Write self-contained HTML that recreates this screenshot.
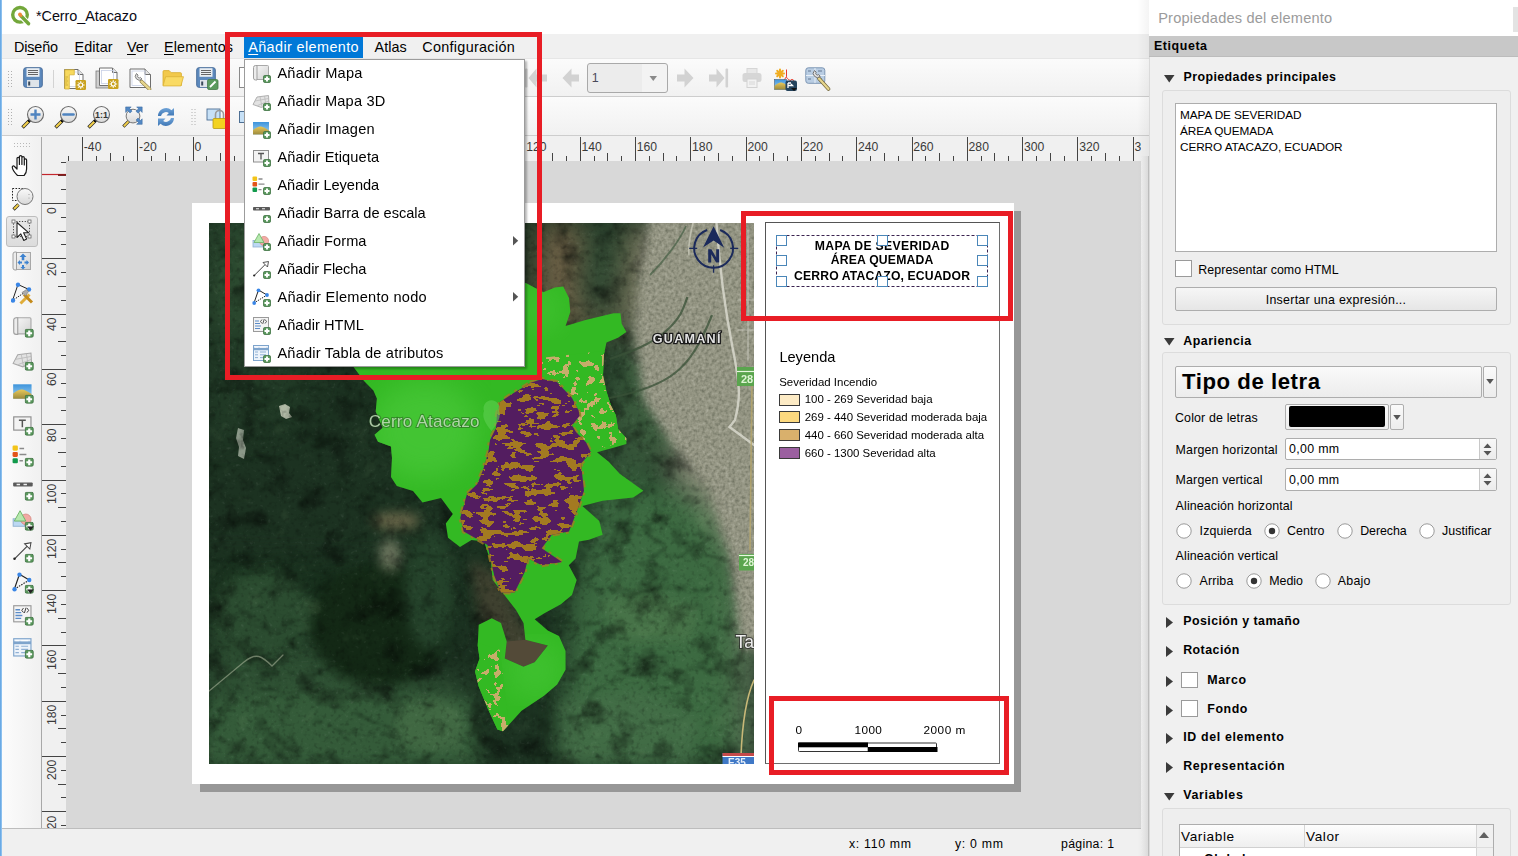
<!DOCTYPE html>
<html><head><meta charset="utf-8"><style>*{box-sizing:border-box}
html,body{margin:0;padding:0}
body{width:1518px;height:856px;position:relative;overflow:hidden;background:#f0f0f0;font-family:"Liberation Sans",sans-serif;color:#000}
.a{position:absolute}
.t{position:absolute;white-space:nowrap;line-height:1}
u{text-decoration-thickness:1px;text-underline-offset:1.5px}
svg{overflow:visible}
</style></head><body>
<svg width="0" height="0" style="position:absolute"><defs>
<linearGradient id="gPaper" x1="0" y1="0" x2="1" y2="1"><stop offset="0" stop-color="#f7f7f7"/><stop offset="1" stop-color="#d2d2d2"/></linearGradient>
<linearGradient id="gSky" x1="0" y1="0" x2="0" y2="1"><stop offset="0" stop-color="#3d94dc"/><stop offset="1" stop-color="#a9d6f2"/></linearGradient>
<linearGradient id="gSand" x1="0" y1="0" x2="0" y2="1"><stop offset="0" stop-color="#e9c95a"/><stop offset="1" stop-color="#9c8a3c"/></linearGradient>
<linearGradient id="gLens" x1="0" y1="0" x2="0" y2="1"><stop offset="0" stop-color="#fafafa"/><stop offset="1" stop-color="#d8d8d8"/></linearGradient>
<linearGradient id="gBlue" x1="0" y1="0" x2="0" y2="1"><stop offset="0" stop-color="#6fa3d8"/><stop offset="1" stop-color="#3f77b5"/></linearGradient>
<symbol id="badge" viewBox="0 0 8 8"><rect x=".5" y=".5" width="7" height="7" rx="1.3" fill="#59975c" stroke="#3f7243" stroke-width=".8"/><path d="M4 1.5V6.5M1.5 4H6.5" stroke="#fff" stroke-width="1.9"/></symbol>
<symbol id="i-map" viewBox="0 0 20 20"><rect x="3.5" y="1.5" width="13" height="14" rx="1" fill="url(#gPaper)" stroke="#a9a9a9"/><path d="M1.5 3.5a2 2 0 0 1 2-2h1.5v14.5h-1.5a2 2 0 0 1-2-2z" fill="#ececec" stroke="#a0a0a0"/><use href="#badge" x="11" y="11" width="8" height="8"/></symbol>
<symbol id="i-3d" viewBox="0 0 20 20"><path d="M1 12.5L5 5 16.5 3.5 17 12 9.5 15.5z" fill="#e2e2e2" stroke="#a8a8a8" stroke-width=".9"/><path d="M3 9l13.5-2.5M5.5 13.5L16.8 9M8 4.5l2 10.5M12.5 4l1.5 9.5" stroke="#b8b8b8" stroke-width=".7" fill="none"/><use href="#badge" x="11" y="11" width="8" height="8"/></symbol>
<symbol id="i-img" viewBox="0 0 20 20"><rect x="1" y="2" width="16" height="12.5" fill="url(#gSky)"/><path d="M1 10Q6 6 9 6.5T17 10.5V14.5H1z" fill="url(#gSand)"/><use href="#badge" x="11" y="11" width="8" height="8"/></symbol>
<symbol id="i-label" viewBox="0 0 20 20"><rect x="1.5" y="2.5" width="15" height="11.5" fill="#f3f3f3" stroke="#8e8e8e"/><path d="M6 5.5h6M9 5.5v6" stroke="#555" stroke-width="1.3"/><use href="#badge" x="11" y="11" width="8" height="8"/></symbol>
<symbol id="i-legend" viewBox="0 0 20 20"><rect x=".5" y=".5" width="4.6" height="4.4" rx="1" fill="#f3c419"/><rect x=".5" y="6" width="4.6" height="4.4" rx="1" fill="#e2541a"/><rect x=".5" y="11.5" width="4.6" height="4.4" rx="1" fill="#129a4c"/><path d="M6.5 3h4M6.5 8.2h6M6.5 13.7h3" stroke="#8a8a8a" stroke-width="1.3"/><use href="#badge" x="11" y="11" width="8" height="8"/></symbol>
<symbol id="i-scale" viewBox="0 0 20 20"><rect x="1" y="3" width="17" height="3.5" rx=".8" fill="#5a5a5a"/><path d="M4 4.75h3M10 4.75h3" stroke="#eee" stroke-width="1.2"/><use href="#badge" x="11" y="11" width="8" height="8"/></symbol>
<symbol id="i-shape" viewBox="0 0 20 20"><rect x="1" y="8.5" width="10" height="6.5" fill="#bcd8f3" stroke="#8fb0d0" stroke-width=".8"/><circle cx="12" cy="9" r="4.6" fill="#f2aaa4" stroke="#d58880" stroke-width=".7"/><path d="M7 1.5L12 10.5H2z" fill="#b5e8ad" stroke="#6bb364" stroke-width=".8"/><use href="#badge" x="11" y="11" width="8" height="8"/></symbol>
<symbol id="i-arrow" viewBox="0 0 20 20"><path d="M2.2 15.5L13.5 4.2" stroke="#444" stroke-width="1"/><path d="M11 2.5L16.5 1.5 15.5 7z" fill="#fff" stroke="#444" stroke-width=".9"/><circle cx="2.2" cy="15.5" r="1.1" fill="#222"/><use href="#badge" x="11" y="11" width="8" height="8"/></symbol>
<symbol id="i-node" viewBox="0 0 20 20"><path d="M6.5 2L2 15M6.5 2L15 7" stroke="#222" stroke-width="1"/><path d="M15 7L2 15" stroke="#222" stroke-width="1" stroke-dasharray="1.3,1"/><circle cx="6.5" cy="2.3" r="1.9" fill="#3a86e6"/><circle cx="15" cy="7" r="1.9" fill="#3a86e6"/><circle cx="2.2" cy="15" r="1.9" fill="#3a86e6"/><use href="#badge" x="11" y="11" width="8" height="8"/></symbol>
<symbol id="i-html" viewBox="0 0 20 20"><rect x="1.5" y="1.5" width="15" height="14" fill="#f4f4f4" stroke="#9a9a9a"/><path d="M3 5h4M3 7.5h5M3 10h6M3 12.5h5" stroke="#5b8cc8" stroke-width="1.2"/><path d="M10 3.5L8.5 5.5 10 7.5M13 3.5l1.5 2-1.5 2M12.2 3.2l-1.4 4.6" stroke="#333" stroke-width=".8" fill="none"/><use href="#badge" x="11" y="11" width="8" height="8"/></symbol>
<symbol id="i-table" viewBox="0 0 20 20"><rect x="1.5" y="1.5" width="15" height="15" fill="#eef4fb" stroke="#7ea4cc"/><path d="M1.5 5h15" stroke="#7ea4cc" stroke-width="2.5"/><path d="M3 3.2h3M8 3.2h6" stroke="#fff" stroke-width=".8"/><path d="M3 8h3M8 8h6M3 10.8h3M8 10.8h6M3 13.6h3M8 13.6h6" stroke="#8fb0d4" stroke-width="1"/><use href="#badge" x="11" y="11" width="8" height="8"/></symbol>
<symbol id="dd" viewBox="0 0 6 4"><path d="M0 0h6L3 4z" fill="#222"/></symbol>

<symbol id="t-save" viewBox="0 0 20 21"><rect x=".7" y=".7" width="18.6" height="19.6" rx="2.2" fill="#5c89bd" stroke="#4a6f9c" stroke-width="1"/><rect x="3.5" y="1.2" width="13" height="8.6" fill="#e9edf1"/><path d="M5 3.5h10M5 5.5h10M5 7.5h10" stroke="#555" stroke-width=".9"/><rect x="4" y="13" width="12" height="7" fill="#dfe4e9"/><rect x="5.2" y="14.5" width="2" height="4" fill="#3b4a5a"/></symbol>
<symbol id="t-new" viewBox="0 0 24 22"><path d="M1.5 1.5h13.5l5 5V20.5H1.5z" fill="#fff" stroke="#6e6e6e"/><path d="M15 1.5v5h5" fill="#e4e4e4" stroke="#6e6e6e"/><rect x="4" y="4" width="12.5" height="14.5" fill="none" stroke="#cbd3e6" stroke-width=".8"/><path d="M1.8 1.8h9.5v5h-5V21H1.8z" fill="#f7d95e" stroke="#d6b338" stroke-width=".8"/><path d="M2.5 9h2.5M2.5 11h1.8M2.5 13h2.5M2.5 15h1.8M2.5 17h2.5" stroke="#b8951f" stroke-width=".6"/><rect x="12.5" y="12" width="10.5" height="10" rx="1.2" fill="#c9a21f"/><circle cx="17.75" cy="17" r="2" fill="none" stroke="#fff" stroke-width="1.1"/><path d="M17.75 13v2M17.75 19v2M13.8 17h2M19.7 17h2M15 14.3l1.3 1.3M19.2 18.6l1.3 1.3M15 19.9l1.3-1.3M19.2 15.6l1.3-1.3" stroke="#fff" stroke-width=".9"/></symbol>
<symbol id="t-dup" viewBox="0 0 24 22"><rect x="1" y="4" width="16" height="17" fill="#cfcfcf" stroke="#7a7a7a" stroke-width=".8"/><path d="M4.5 1h13l4.5 4.5V18.5H4.5z" fill="#fff" stroke="#6e6e6e"/><path d="M17.5 1v4.5H22" fill="#e4e4e4" stroke="#6e6e6e"/><rect x="6.5" y="3.5" width="12" height="13" fill="none" stroke="#c8d0e6" stroke-width=".8"/><rect x="13" y="12" width="10.5" height="10" rx="1.2" fill="#c9a21f"/><circle cx="18.25" cy="17" r="2" fill="none" stroke="#fff" stroke-width="1.1"/><path d="M18.25 13v2M18.25 19v2M14.3 17h2M20.2 17h2M15.5 14.3l1.3 1.3M19.7 18.6l1.3 1.3M15.5 19.9l1.3-1.3M19.7 15.6l1.3-1.3" stroke="#fff" stroke-width=".9"/></symbol>
<symbol id="t-mgr" viewBox="0 0 24 22"><path d="M1 1h15l5.5 5.5V19.5H1z" fill="#fff" stroke="#6e6e6e"/><path d="M16 1v5.5h5.5" fill="#e4e4e4" stroke="#6e6e6e"/><rect x="3" y="3" width="13" height="14.5" fill="none" stroke="#c8d0e6" stroke-width=".8"/><path d="M12.5 13.5l8 7.5" stroke="#7a6a3a" stroke-width="3.6" stroke-linecap="round"/><path d="M12.5 13.5l8 7.5" stroke="#e6d58c" stroke-width="2.4" stroke-linecap="round"/><path d="M7.5 5.5a3.8 3.8 0 1 0 5.5 5.5l-1.6-1.6a1.6 1.6 0 0 1-2.3-2.3z" fill="#dcdcdc" stroke="#777" stroke-width=".9"/></symbol>
<symbol id="t-open" viewBox="0 0 22 18"><path d="M1 2.5a1 1 0 0 1 1-1h5l2 2h9a1 1 0 0 1 1 1V16H1z" fill="#f2c94c" stroke="#d9ad2e" stroke-width=".8"/><path d="M1 16.5L3.5 7.5h17.5L18.5 16.5z" fill="#f9da64" stroke="#dcb338" stroke-width=".8"/></symbol>
<symbol id="t-saveas" viewBox="0 0 23 23"><rect x=".7" y=".7" width="18.6" height="19.6" rx="2.2" fill="#5c89bd" stroke="#4a6f9c" stroke-width="1"/><rect x="3.5" y="1.2" width="13" height="8.6" fill="#e9edf1"/><path d="M5 3.5h10M5 5.5h10M5 7.5h10" stroke="#555" stroke-width=".9"/><rect x="4" y="13" width="12" height="7" fill="#dfe4e9"/><rect x="5.2" y="14.5" width="2" height="4" fill="#3b4a5a"/><rect x="11.5" y="12.5" width="10.5" height="10" rx="1.5" fill="#5b9a5d" stroke="#457a48" stroke-width=".8"/><path d="M14 20l5.5-5.5" stroke="#fff" stroke-width="1.8"/></symbol>
<symbol id="t-zoom" viewBox="0 0 24 24"><path d="M1.5 22.5l6.5-6.5" stroke="#222" stroke-width="3.4"/><path d="M2 22l5.5-5.5" stroke="#f2d04c" stroke-width="2.2"/><circle cx="8.3" cy="15.7" r="1.6" fill="#111"/><circle cx="14.5" cy="9.5" r="8" fill="url(#gLens)" stroke="#6a6a6a" stroke-width="1.1"/></symbol>
<symbol id="t-zin" viewBox="0 0 24 24"><use href="#t-zoom"/><path d="M14.5 4.5v10M9.5 9.5h10" stroke="#4f84c0" stroke-width="2.4"/></symbol>
<symbol id="t-zout" viewBox="0 0 24 24"><use href="#t-zoom"/><path d="M9.5 9.5h10" stroke="#4f84c0" stroke-width="2.6" stroke-linecap="round"/></symbol>
<symbol id="t-z11" viewBox="0 0 24 24"><use href="#t-zoom"/><text x="14.6" y="13" font-family="Liberation Sans" font-weight="bold" font-size="9" text-anchor="middle" fill="#333">1:1</text></symbol>
<symbol id="t-zfull" viewBox="0 0 24 24"><path d="M1.5 22.5l6.5-6.5" stroke="#222" stroke-width="3.4"/><path d="M2 22l5.5-5.5" stroke="#f2d04c" stroke-width="2.2"/><circle cx="8.8" cy="15.2" r="1.6" fill="#111"/><circle cx="12" cy="11" r="7.5" fill="url(#gLens)" stroke="#6a6a6a" stroke-width="1"/><path d="M4 1h6L8.3 2.8l2.7 2.7-2.2 2.2-2.7-2.7L4 7z M22 1v6l-1.8-1.8-2.7 2.7-2.2-2.2 2.7-2.7L16 1z M22 20v-6l-1.8 1.8-2.7-2.7-2.2 2.2 2.7 2.7L16 20z" fill="#5288c4" stroke="#3a6aa0" stroke-width=".6"/></symbol>
<symbol id="t-refresh" viewBox="0 0 22 22"><path d="M3 10A8 8 0 0 1 16.5 4.2L19 2v7.5h-7.5l2.4-2.4A5 5 0 0 0 6 10z" fill="url(#gBlue)"/><path d="M19 12A8 8 0 0 1 5.5 17.8L3 20v-7.5h7.5l-2.4 2.4A5 5 0 0 0 16 12z" fill="url(#gBlue)"/></symbol>
<symbol id="t-lock" viewBox="0 0 22 22"><rect x="1" y="1" width="13" height="11" fill="#c7e1f7" stroke="#4d6f94" stroke-width=".9"/><path d="M9.5 11V6.5a4 4 0 0 1 8 0V11" fill="none" stroke="#9a9a9a" stroke-width="1.6"/><rect x="7" y="10.5" width="13.5" height="10" rx="1" fill="#f3d21f" stroke="#b79a12" stroke-width=".8"/></symbol>
<symbol id="t-prev" viewBox="0 0 18 20"><path d="M0.5 10L9.5 0.5V6.5H17V13.5H9.5V19.5z" fill="#d2d2d2"/></symbol>
<symbol id="t-next" viewBox="0 0 18 20"><path d="M17.5 10L8.5 0.5V6.5H1V13.5H8.5V19.5z" fill="#d2d2d2"/></symbol>
<symbol id="t-last" viewBox="0 0 21 20"><path d="M16.5 10L8.5 0.5V6.5H1V13.5H8.5V19.5z" fill="#d2d2d2"/><rect x="17.5" y="0.5" width="2.6" height="19" rx="1" fill="#d2d2d2"/></symbol>
<symbol id="t-print" viewBox="0 0 20 20"><rect x="5" y=".5" width="10" height="5" fill="#e8e8e8" stroke="#d6d6d6"/><rect x=".5" y="5" width="19" height="9" rx="2.5" fill="#d6d6d6"/><rect x="5" y="11" width="10" height="8.5" fill="#f2f2f2" stroke="#d2d2d2"/><path d="M7 14h6M7 16h6" stroke="#d0d0d0" stroke-width=".8"/></symbol>
<symbol id="t-export" viewBox="0 0 24 23"><g stroke="#f0ad21" stroke-width="2" stroke-linecap="round"><path d="M6 1.5v8M2 5.5h8M3.2 2.7l5.6 5.6M8.8 2.7L3.2 8.3"/></g><path d="M12.5 1.5v7c0 1.5 1 2.5 4.5 4.5M12.5 8.5c-1 2-3 4-4 5" stroke="#e63b2e" stroke-width="1" fill="none"/><circle cx="18" cy="13" r="1.6" fill="none" stroke="#e63b2e" stroke-width=".9"/><rect x=".5" y="11.5" width="12" height="10" fill="url(#gSky)" stroke="#46607a" stroke-width=".6"/><path d="M.5 18q4-4 7-3.5t5 2.5V21.5H.5z" fill="url(#gSand)"/><rect x="11.5" y="12.5" width="11.5" height="10.5" rx="2" fill="#24435c"/><path d="M14 15v5M14 15h3M14 17.5h4.5l-1.5-1.5" stroke="#fff" stroke-width="1.3" fill="none"/><path d="M17 20h6l-3 3z" fill="#111"/></symbol>
<symbol id="t-atlas" viewBox="0 0 26 24"><rect x=".8" y=".8" width="19" height="15.5" rx="2.5" fill="#b9cde3" stroke="#7d96b4" stroke-width="1"/><path d="M10 1v15M1 8.5h19" stroke="#e8f0f8" stroke-width="1"/><path d="M3 4h3M13 4h4M3 12h3M14 12h3" stroke="#5a6e88" stroke-width=".9"/><path d="M14 11.5l9.5 10.5" stroke="#6e6238" stroke-width="3.6" stroke-linecap="round"/><path d="M14 11.5l9.5 10.5" stroke="#e6d58c" stroke-width="2.3" stroke-linecap="round"/><path d="M9.5 3.5a4 4 0 1 0 5.8 5.8l-1.7-1.7a1.7 1.7 0 0 1-2.4-2.4z" fill="#e4e4e4" stroke="#666" stroke-width=".9"/></symbol>

<symbol id="l-pan" viewBox="0 0 24 24"><path d="M6.5 21.5c-2-2-5-6-5.2-8-.2-1.5 1.2-2 2.2-1l2.5 2.6V4.5c0-1.6 2.4-1.6 2.4 0v6V2.8c0-1.6 2.5-1.6 2.5 0V10.5V3.8c0-1.6 2.4-1.6 2.4 0V11V6c0-1.6 2.3-1.6 2.3 0v9c0 3-1 5-2.5 6.5z" fill="#fff" stroke="#1a1a1a" stroke-width="1.2" stroke-linejoin="round"/></symbol>
<symbol id="l-zoom" viewBox="0 0 24 24"><rect x="1.5" y="1.5" width="11" height="12" fill="none" stroke="#222" stroke-width="1" stroke-dasharray="1.6,1.4"/><path d="M2.5 22.5l5-5" stroke="#222" stroke-width="3.2"/><path d="M3 22l4.3-4.3" stroke="#f2d04c" stroke-width="2"/><circle cx="14" cy="9.5" r="8" fill="url(#gLens)" stroke="#777" stroke-width="1"/><circle cx="18" cy="7.5" r=".6" fill="#999"/><circle cx="18" cy="11" r=".6" fill="#999"/></symbol>
<symbol id="l-select" viewBox="0 0 24 24"><rect x="2.5" y="2.5" width="16" height="15" fill="none" stroke="#333" stroke-width=".9" stroke-dasharray="1.2,1.6"/><rect x="1" y="1" width="3" height="3" fill="#fff" stroke="#555" stroke-width=".7"/><rect x="17" y="1" width="3" height="3" fill="#fff" stroke="#555" stroke-width=".7"/><rect x="1" y="16" width="3" height="3" fill="#fff" stroke="#555" stroke-width=".7"/><rect x="17" y="16" width="3" height="3" fill="#fff" stroke="#555" stroke-width=".7"/><path d="M6 3.5v15l3.8-3.6 3 6.5 2.8-1.3-3-6.3h5.2z" fill="#fff" stroke="#222" stroke-width="1.1" stroke-linejoin="round"/></symbol>
<symbol id="l-move" viewBox="0 0 24 24"><rect x="4.5" y="2.5" width="15" height="17" fill="url(#gPaper)" stroke="#a8a8a8"/><path d="M2 4a2 2 0 0 1 2-2h1.5v18H4a2 2 0 0 1-2-2z" fill="#ececec" stroke="#a0a0a0"/><path d="M12 3.5l3.5 3.5h-2.2v3.2h-2.6V7H8.5z M12 19.5l-2.5-2.5h1.5v-2h2v2h1.5z M6.5 12.5l2.5-2.5v1.5h2v2h-2v1.5z M18 12.5l-2.5-2.5v1.5h-2v2h2v1.5z" fill="#3d82d0"/></symbol>
<symbol id="l-edit" viewBox="0 0 24 24"><path d="M7 2.5L1.5 18.5M7 2.5l11 5" stroke="#222" stroke-width="1"/><path d="M18 7.5L1.5 18.5" stroke="#222" stroke-width="1" stroke-dasharray="1.4,1"/><circle cx="7" cy="2.8" r="2.2" fill="#3a86e6"/><circle cx="18" cy="7.5" r="2.2" fill="#3a86e6"/><circle cx="2" cy="18.5" r="2.2" fill="#3a86e6"/><path d="M9.5 21.5l9-9" stroke="#e0ad3a" stroke-width="3"/><path d="M13 12.5l8 8" stroke="#c48a1a" stroke-width="3"/><path d="M11 10.5l4.5-3 2 2-3 4.5z" fill="#aaa" stroke="#777" stroke-width=".6"/></symbol>
</defs>
</svg>
<div class="a" style="left:0px;top:0px;width:1149px;height:34px;background:#fff"></div><svg class="a" style="left:10px;top:5px" width="21" height="21" viewBox="0 0 21 21"><circle cx="10" cy="9.8" r="7.3" fill="none" stroke="#73a73a" stroke-width="3.4"/><path d="M10.5 10.5l8 8.5" stroke="#fff" stroke-width="5.5"/><path d="M10.8 10.8l7.8 8" stroke="#73a73a" stroke-width="3.4" stroke-linecap="round"/><circle cx="10" cy="9.5" r="1.9" fill="#ee8a3a"/><path d="M9 8.5l3 3" stroke="#ee8a3a" stroke-width="2.2"/></svg>
<div class="t" style="left:36.00px;top:8.81px;font-size:14.4px;color:#0a0a14;letter-spacing:-0.05px;">*Cerro_Atacazo</div><div class="a" style="left:0px;top:34px;width:1149px;height:24px;background:#f0f0f0"></div><div class="a" style="left:244px;top:37px;width:119px;height:22px;background:#0078d7"></div><div class="t" style="left:14.00px;top:39.81px;font-size:14.4px;letter-spacing:-0.16px;">Di<u>s</u>eño</div><div class="t" style="left:74.50px;top:39.81px;font-size:14.4px;letter-spacing:0.08px;"><u>E</u>ditar</div><div class="t" style="left:127.00px;top:39.81px;font-size:14.4px;"><u>V</u>er</div><div class="t" style="left:164.00px;top:39.81px;font-size:14.4px;letter-spacing:0.13px;"><u>E</u>lementos</div><div class="t" style="left:248.20px;top:39.81px;font-size:14.4px;color:#fff;letter-spacing:0.4px;"><u>A</u>ñadir elemento</div><div class="t" style="left:374.60px;top:39.81px;font-size:14.4px;letter-spacing:0.03px;">Atlas</div><div class="t" style="left:422.20px;top:39.81px;font-size:14.4px;letter-spacing:0.31px;">Configuración</div><div class="a" style="left:2px;top:58px;width:1147px;height:39px;background:linear-gradient(#fbfbfb,#f1f1f1);border-top:1px solid #e6e6e6;border-bottom:1px solid #cdcdcd"></div><div class="a" style="left:2px;top:97px;width:1147px;height:39px;background:linear-gradient(#fbfbfb,#f1f1f1);border-bottom:1px solid #cdcdcd"></div><svg class="a" style="left:0;top:0" width="300" height="140"><rect x="8" y="71" width="1" height="1" fill="#b0b0b0"/><rect x="8" y="74" width="1" height="1" fill="#b0b0b0"/><rect x="8" y="77" width="1" height="1" fill="#b0b0b0"/><rect x="8" y="80" width="1" height="1" fill="#b0b0b0"/><rect x="8" y="83" width="1" height="1" fill="#b0b0b0"/><rect x="8" y="86" width="1" height="1" fill="#b0b0b0"/><rect x="11" y="71" width="1" height="1" fill="#b0b0b0"/><rect x="11" y="74" width="1" height="1" fill="#b0b0b0"/><rect x="11" y="77" width="1" height="1" fill="#b0b0b0"/><rect x="11" y="80" width="1" height="1" fill="#b0b0b0"/><rect x="11" y="83" width="1" height="1" fill="#b0b0b0"/><rect x="11" y="86" width="1" height="1" fill="#b0b0b0"/></svg><svg class="a" style="left:0;top:0" width="300" height="140"><rect x="8" y="109" width="1" height="1" fill="#b0b0b0"/><rect x="8" y="112" width="1" height="1" fill="#b0b0b0"/><rect x="8" y="115" width="1" height="1" fill="#b0b0b0"/><rect x="8" y="118" width="1" height="1" fill="#b0b0b0"/><rect x="8" y="121" width="1" height="1" fill="#b0b0b0"/><rect x="8" y="124" width="1" height="1" fill="#b0b0b0"/><rect x="11" y="109" width="1" height="1" fill="#b0b0b0"/><rect x="11" y="112" width="1" height="1" fill="#b0b0b0"/><rect x="11" y="115" width="1" height="1" fill="#b0b0b0"/><rect x="11" y="118" width="1" height="1" fill="#b0b0b0"/><rect x="11" y="121" width="1" height="1" fill="#b0b0b0"/><rect x="11" y="124" width="1" height="1" fill="#b0b0b0"/></svg><svg class="a" style="left:0;top:0" width="300" height="140"><rect x="191.5" y="109" width="1" height="1" fill="#b0b0b0"/><rect x="191.5" y="112" width="1" height="1" fill="#b0b0b0"/><rect x="191.5" y="115" width="1" height="1" fill="#b0b0b0"/><rect x="191.5" y="118" width="1" height="1" fill="#b0b0b0"/><rect x="191.5" y="121" width="1" height="1" fill="#b0b0b0"/><rect x="191.5" y="124" width="1" height="1" fill="#b0b0b0"/><rect x="194.5" y="109" width="1" height="1" fill="#b0b0b0"/><rect x="194.5" y="112" width="1" height="1" fill="#b0b0b0"/><rect x="194.5" y="115" width="1" height="1" fill="#b0b0b0"/><rect x="194.5" y="118" width="1" height="1" fill="#b0b0b0"/><rect x="194.5" y="121" width="1" height="1" fill="#b0b0b0"/><rect x="194.5" y="124" width="1" height="1" fill="#b0b0b0"/></svg><div class="a" style="left:53px;top:70px;width:1px;height:18px;background:#d3d3d3"></div><svg class="a" style="left:23px;top:67px" width="20" height="21" viewBox="0 0 20 21"><use href="#t-save"/></svg><svg class="a" style="left:63px;top:68px" width="24" height="22" viewBox="0 0 24 22"><use href="#t-new"/></svg><svg class="a" style="left:95px;top:66px" width="24" height="24" viewBox="0 0 24 22"><use href="#t-dup"/></svg><svg class="a" style="left:129px;top:68px" width="24" height="22" viewBox="0 0 24 22"><use href="#t-mgr"/></svg><svg class="a" style="left:161.5px;top:68.5px" width="22.5" height="18.5" viewBox="0 0 22 18"><use href="#t-open"/></svg><svg class="a" style="left:196px;top:67px" width="23" height="23" viewBox="0 0 23 23"><use href="#t-saveas"/></svg><div class="a" style="left:239px;top:67px;width:8px;height:21px;background:#fff;border:1px solid #8a8a8a;border-right:none"></div><svg class="a" style="left:21px;top:105px" width="24" height="24" viewBox="0 0 24 24"><use href="#t-zin"/></svg><svg class="a" style="left:54px;top:105px" width="24" height="24" viewBox="0 0 24 24"><use href="#t-zout"/></svg><svg class="a" style="left:87px;top:105px" width="24" height="24" viewBox="0 0 24 24"><use href="#t-z11"/></svg><svg class="a" style="left:121px;top:105px" width="24" height="24" viewBox="0 0 24 22"><use href="#t-zfull"/></svg><svg class="a" style="left:154.5px;top:106px" width="22" height="22" viewBox="0 0 22 22"><use href="#t-refresh"/></svg><svg class="a" style="left:205.5px;top:107.5px" width="22" height="22" viewBox="0 0 22 22"><use href="#t-lock"/></svg><div class="a" style="left:239px;top:111px;width:8px;height:12px;background:#c7e1f7;border:1px solid #4d6f94;border-right:none"></div><svg class="a" style="left:524px;top:68px" width="24" height="20" viewBox="0 0 24 20"><rect x="1" y="0.5" width="2.6" height="19" rx="1" fill="#d2d2d2"/><path d="M4.5 10L12.5 0.5V6.5H23V13.5H12.5V19.5z" fill="#d2d2d2"/></svg><svg class="a" style="left:561.5px;top:68px" width="18" height="20" viewBox="0 0 18 20"><use href="#t-prev"/></svg><div class="a" style="left:587px;top:63px;width:81px;height:29.5px;border:1px solid #a9a9a9;border-radius:3px;background:linear-gradient(90deg,#ececec 0,#ececec 68%,#f3f3f3 68%)"></div><div class="t" style="left:591.80px;top:72.02px;font-size:12.5px;color:#4a4a5a;">1</div><svg class="a" style="left:648.5px;top:75.5px" width="8.5" height="5" viewBox="0 0 6 4"><path d="M0 0h6L3 4z" fill="#8a8a8a"/></svg><svg class="a" style="left:676px;top:68px" width="18" height="20" viewBox="0 0 18 20"><use href="#t-next"/></svg><svg class="a" style="left:707.5px;top:68px" width="21" height="20" viewBox="0 0 21 20"><use href="#t-last"/></svg><svg class="a" style="left:741.5px;top:68px" width="20" height="20" viewBox="0 0 20 20"><use href="#t-print"/></svg><svg class="a" style="left:774px;top:67.5px" width="24" height="23" viewBox="0 0 24 23"><use href="#t-export"/></svg><svg class="a" style="left:804.5px;top:66.5px" width="26" height="24" viewBox="0 0 26 24"><use href="#t-atlas"/></svg><div class="a" style="left:2px;top:136px;width:40px;height:692px;background:linear-gradient(90deg,#fcfcfc,#f0f0f0)"></div><svg class="a" style="left:0;top:0" width="60" height="160"><rect x="14" y="143" width="1" height="1" fill="#b8b8b8"/><rect x="14" y="146" width="1" height="1" fill="#b8b8b8"/><rect x="17" y="143" width="1" height="1" fill="#b8b8b8"/><rect x="17" y="146" width="1" height="1" fill="#b8b8b8"/><rect x="20" y="143" width="1" height="1" fill="#b8b8b8"/><rect x="20" y="146" width="1" height="1" fill="#b8b8b8"/><rect x="23" y="143" width="1" height="1" fill="#b8b8b8"/><rect x="23" y="146" width="1" height="1" fill="#b8b8b8"/><rect x="26" y="143" width="1" height="1" fill="#b8b8b8"/><rect x="26" y="146" width="1" height="1" fill="#b8b8b8"/><rect x="29" y="143" width="1" height="1" fill="#b8b8b8"/><rect x="29" y="146" width="1" height="1" fill="#b8b8b8"/></svg><div class="a" style="left:6px;top:216px;width:32px;height:31px;background:linear-gradient(#e9e9e9,#dcdcdc);border:1px solid #bdbdbd;border-radius:3px"></div><svg class="a" style="left:11px;top:154px" width="24" height="24" viewBox="0 0 24 24"><use href="#l-pan"/></svg><svg class="a" style="left:11px;top:187px" width="24" height="24" viewBox="0 0 24 24"><use href="#l-zoom"/></svg><svg class="a" style="left:11px;top:219px" width="24" height="24" viewBox="0 0 24 24"><use href="#l-select"/></svg><svg class="a" style="left:11px;top:250px" width="24" height="24" viewBox="0 0 24 24"><use href="#l-move"/></svg><svg class="a" style="left:11px;top:282px" width="24" height="24" viewBox="0 0 24 24"><use href="#l-edit"/></svg><svg class="a" style="left:11.5px;top:316px" width="23" height="23" viewBox="0 0 20 20"><use href="#i-map"/></svg><svg class="a" style="left:11.5px;top:349px" width="23" height="23" viewBox="0 0 20 20"><use href="#i-3d"/></svg><svg class="a" style="left:11.5px;top:382px" width="23" height="23" viewBox="0 0 20 20"><use href="#i-img"/></svg><svg class="a" style="left:11.5px;top:414px" width="23" height="23" viewBox="0 0 20 20"><use href="#i-label"/></svg><svg class="a" style="left:11.5px;top:445px" width="23" height="23" viewBox="0 0 20 20"><use href="#i-legend"/></svg><svg class="a" style="left:11.5px;top:479px" width="23" height="23" viewBox="0 0 20 20"><use href="#i-scale"/></svg><svg class="a" style="left:11.5px;top:509px" width="23" height="23" viewBox="0 0 20 20"><use href="#i-shape"/></svg><svg class="a" style="left:11.5px;top:541px" width="23" height="23" viewBox="0 0 20 20"><use href="#i-arrow"/></svg><svg class="a" style="left:11.5px;top:572px" width="23" height="23" viewBox="0 0 20 20"><use href="#i-node"/></svg><svg class="a" style="left:11.5px;top:604px" width="23" height="23" viewBox="0 0 20 20"><use href="#i-html"/></svg><svg class="a" style="left:11.5px;top:637px" width="23" height="23" viewBox="0 0 20 20"><use href="#i-table"/></svg><svg class="a" style="left:27px;top:526px" width="7" height="5" viewBox="0 0 6 4"><use href="#dd"/></svg><svg class="a" style="left:27px;top:589px" width="7" height="5" viewBox="0 0 6 4"><use href="#dd"/></svg><div class="a" style="left:42px;top:136px;width:1106px;height:25px;background:#f0f0f0"></div><div class="a" style="left:41px;top:137px;width:1px;height:691px;background:#a8a8a8"></div><div class="a" style="left:42px;top:161px;width:24px;height:667px;background:#f0f0f0"></div><svg class="a" style="left:0;top:0" width="1149" height="856"><line x1="68.5" y1="156" x2="68.5" y2="161" stroke="#444" stroke-width="1"/><line x1="82.5" y1="137" x2="82.5" y2="161" stroke="#444" stroke-width="1"/><line x1="96.5" y1="156" x2="96.5" y2="161" stroke="#444" stroke-width="1"/><line x1="110.5" y1="153" x2="110.5" y2="161" stroke="#444" stroke-width="1"/><line x1="123.5" y1="156" x2="123.5" y2="161" stroke="#444" stroke-width="1"/><line x1="137.5" y1="137" x2="137.5" y2="161" stroke="#444" stroke-width="1"/><line x1="151.5" y1="156" x2="151.5" y2="161" stroke="#444" stroke-width="1"/><line x1="165.5" y1="153" x2="165.5" y2="161" stroke="#444" stroke-width="1"/><line x1="179.5" y1="156" x2="179.5" y2="161" stroke="#444" stroke-width="1"/><line x1="193.5" y1="137" x2="193.5" y2="161" stroke="#444" stroke-width="1"/><line x1="206.5" y1="156" x2="206.5" y2="161" stroke="#444" stroke-width="1"/><line x1="220.5" y1="153" x2="220.5" y2="161" stroke="#444" stroke-width="1"/><line x1="234.5" y1="156" x2="234.5" y2="161" stroke="#444" stroke-width="1"/><line x1="248.5" y1="137" x2="248.5" y2="161" stroke="#444" stroke-width="1"/><line x1="262.5" y1="156" x2="262.5" y2="161" stroke="#444" stroke-width="1"/><line x1="276.5" y1="153" x2="276.5" y2="161" stroke="#444" stroke-width="1"/><line x1="289.5" y1="156" x2="289.5" y2="161" stroke="#444" stroke-width="1"/><line x1="303.5" y1="137" x2="303.5" y2="161" stroke="#444" stroke-width="1"/><line x1="317.5" y1="156" x2="317.5" y2="161" stroke="#444" stroke-width="1"/><line x1="331.5" y1="153" x2="331.5" y2="161" stroke="#444" stroke-width="1"/><line x1="345.5" y1="156" x2="345.5" y2="161" stroke="#444" stroke-width="1"/><line x1="358.5" y1="137" x2="358.5" y2="161" stroke="#444" stroke-width="1"/><line x1="372.5" y1="156" x2="372.5" y2="161" stroke="#444" stroke-width="1"/><line x1="386.5" y1="153" x2="386.5" y2="161" stroke="#444" stroke-width="1"/><line x1="400.5" y1="156" x2="400.5" y2="161" stroke="#444" stroke-width="1"/><line x1="414.5" y1="137" x2="414.5" y2="161" stroke="#444" stroke-width="1"/><line x1="428.5" y1="156" x2="428.5" y2="161" stroke="#444" stroke-width="1"/><line x1="441.5" y1="153" x2="441.5" y2="161" stroke="#444" stroke-width="1"/><line x1="455.5" y1="156" x2="455.5" y2="161" stroke="#444" stroke-width="1"/><line x1="469.5" y1="137" x2="469.5" y2="161" stroke="#444" stroke-width="1"/><line x1="483.5" y1="156" x2="483.5" y2="161" stroke="#444" stroke-width="1"/><line x1="497.5" y1="153" x2="497.5" y2="161" stroke="#444" stroke-width="1"/><line x1="511.5" y1="156" x2="511.5" y2="161" stroke="#444" stroke-width="1"/><line x1="524.5" y1="137" x2="524.5" y2="161" stroke="#444" stroke-width="1"/><line x1="538.5" y1="156" x2="538.5" y2="161" stroke="#444" stroke-width="1"/><line x1="552.5" y1="153" x2="552.5" y2="161" stroke="#444" stroke-width="1"/><line x1="566.5" y1="156" x2="566.5" y2="161" stroke="#444" stroke-width="1"/><line x1="580.5" y1="137" x2="580.5" y2="161" stroke="#444" stroke-width="1"/><line x1="594.5" y1="156" x2="594.5" y2="161" stroke="#444" stroke-width="1"/><line x1="607.5" y1="153" x2="607.5" y2="161" stroke="#444" stroke-width="1"/><line x1="621.5" y1="156" x2="621.5" y2="161" stroke="#444" stroke-width="1"/><line x1="635.5" y1="137" x2="635.5" y2="161" stroke="#444" stroke-width="1"/><line x1="649.5" y1="156" x2="649.5" y2="161" stroke="#444" stroke-width="1"/><line x1="663.5" y1="153" x2="663.5" y2="161" stroke="#444" stroke-width="1"/><line x1="676.5" y1="156" x2="676.5" y2="161" stroke="#444" stroke-width="1"/><line x1="690.5" y1="137" x2="690.5" y2="161" stroke="#444" stroke-width="1"/><line x1="704.5" y1="156" x2="704.5" y2="161" stroke="#444" stroke-width="1"/><line x1="718.5" y1="153" x2="718.5" y2="161" stroke="#444" stroke-width="1"/><line x1="732.5" y1="156" x2="732.5" y2="161" stroke="#444" stroke-width="1"/><line x1="746.5" y1="137" x2="746.5" y2="161" stroke="#444" stroke-width="1"/><line x1="759.5" y1="156" x2="759.5" y2="161" stroke="#444" stroke-width="1"/><line x1="773.5" y1="153" x2="773.5" y2="161" stroke="#444" stroke-width="1"/><line x1="787.5" y1="156" x2="787.5" y2="161" stroke="#444" stroke-width="1"/><line x1="801.5" y1="137" x2="801.5" y2="161" stroke="#444" stroke-width="1"/><line x1="815.5" y1="156" x2="815.5" y2="161" stroke="#444" stroke-width="1"/><line x1="829.5" y1="153" x2="829.5" y2="161" stroke="#444" stroke-width="1"/><line x1="842.5" y1="156" x2="842.5" y2="161" stroke="#444" stroke-width="1"/><line x1="856.5" y1="137" x2="856.5" y2="161" stroke="#444" stroke-width="1"/><line x1="870.5" y1="156" x2="870.5" y2="161" stroke="#444" stroke-width="1"/><line x1="884.5" y1="153" x2="884.5" y2="161" stroke="#444" stroke-width="1"/><line x1="898.5" y1="156" x2="898.5" y2="161" stroke="#444" stroke-width="1"/><line x1="912.5" y1="137" x2="912.5" y2="161" stroke="#444" stroke-width="1"/><line x1="925.5" y1="156" x2="925.5" y2="161" stroke="#444" stroke-width="1"/><line x1="939.5" y1="153" x2="939.5" y2="161" stroke="#444" stroke-width="1"/><line x1="953.5" y1="156" x2="953.5" y2="161" stroke="#444" stroke-width="1"/><line x1="967.5" y1="137" x2="967.5" y2="161" stroke="#444" stroke-width="1"/><line x1="981.5" y1="156" x2="981.5" y2="161" stroke="#444" stroke-width="1"/><line x1="994.5" y1="153" x2="994.5" y2="161" stroke="#444" stroke-width="1"/><line x1="1008.5" y1="156" x2="1008.5" y2="161" stroke="#444" stroke-width="1"/><line x1="1022.5" y1="137" x2="1022.5" y2="161" stroke="#444" stroke-width="1"/><line x1="1036.5" y1="156" x2="1036.5" y2="161" stroke="#444" stroke-width="1"/><line x1="1050.5" y1="153" x2="1050.5" y2="161" stroke="#444" stroke-width="1"/><line x1="1064.5" y1="156" x2="1064.5" y2="161" stroke="#444" stroke-width="1"/><line x1="1077.5" y1="137" x2="1077.5" y2="161" stroke="#444" stroke-width="1"/><line x1="1091.5" y1="156" x2="1091.5" y2="161" stroke="#444" stroke-width="1"/><line x1="1105.5" y1="153" x2="1105.5" y2="161" stroke="#444" stroke-width="1"/><line x1="1119.5" y1="156" x2="1119.5" y2="161" stroke="#444" stroke-width="1"/><line x1="1133.5" y1="137" x2="1133.5" y2="161" stroke="#444" stroke-width="1"/><line x1="1147.5" y1="156" x2="1147.5" y2="161" stroke="#444" stroke-width="1"/><line x1="61" y1="162.5" x2="66" y2="162.5" stroke="#444" stroke-width="1"/><line x1="58" y1="175.5" x2="66" y2="175.5" stroke="#444" stroke-width="1"/><line x1="61" y1="189.5" x2="66" y2="189.5" stroke="#444" stroke-width="1"/><line x1="42" y1="203.5" x2="66" y2="203.5" stroke="#444" stroke-width="1"/><line x1="61" y1="217.5" x2="66" y2="217.5" stroke="#444" stroke-width="1"/><line x1="58" y1="231.5" x2="66" y2="231.5" stroke="#444" stroke-width="1"/><line x1="61" y1="244.5" x2="66" y2="244.5" stroke="#444" stroke-width="1"/><line x1="42" y1="258.5" x2="66" y2="258.5" stroke="#444" stroke-width="1"/><line x1="61" y1="272.5" x2="66" y2="272.5" stroke="#444" stroke-width="1"/><line x1="58" y1="286.5" x2="66" y2="286.5" stroke="#444" stroke-width="1"/><line x1="61" y1="300.5" x2="66" y2="300.5" stroke="#444" stroke-width="1"/><line x1="42" y1="314.5" x2="66" y2="314.5" stroke="#444" stroke-width="1"/><line x1="61" y1="327.5" x2="66" y2="327.5" stroke="#444" stroke-width="1"/><line x1="58" y1="341.5" x2="66" y2="341.5" stroke="#444" stroke-width="1"/><line x1="61" y1="355.5" x2="66" y2="355.5" stroke="#444" stroke-width="1"/><line x1="42" y1="369.5" x2="66" y2="369.5" stroke="#444" stroke-width="1"/><line x1="61" y1="383.5" x2="66" y2="383.5" stroke="#444" stroke-width="1"/><line x1="58" y1="397.5" x2="66" y2="397.5" stroke="#444" stroke-width="1"/><line x1="61" y1="410.5" x2="66" y2="410.5" stroke="#444" stroke-width="1"/><line x1="42" y1="424.5" x2="66" y2="424.5" stroke="#444" stroke-width="1"/><line x1="61" y1="438.5" x2="66" y2="438.5" stroke="#444" stroke-width="1"/><line x1="58" y1="452.5" x2="66" y2="452.5" stroke="#444" stroke-width="1"/><line x1="61" y1="466.5" x2="66" y2="466.5" stroke="#444" stroke-width="1"/><line x1="42" y1="480.5" x2="66" y2="480.5" stroke="#444" stroke-width="1"/><line x1="61" y1="493.5" x2="66" y2="493.5" stroke="#444" stroke-width="1"/><line x1="58" y1="507.5" x2="66" y2="507.5" stroke="#444" stroke-width="1"/><line x1="61" y1="521.5" x2="66" y2="521.5" stroke="#444" stroke-width="1"/><line x1="42" y1="535.5" x2="66" y2="535.5" stroke="#444" stroke-width="1"/><line x1="61" y1="549.5" x2="66" y2="549.5" stroke="#444" stroke-width="1"/><line x1="58" y1="562.5" x2="66" y2="562.5" stroke="#444" stroke-width="1"/><line x1="61" y1="576.5" x2="66" y2="576.5" stroke="#444" stroke-width="1"/><line x1="42" y1="590.5" x2="66" y2="590.5" stroke="#444" stroke-width="1"/><line x1="61" y1="604.5" x2="66" y2="604.5" stroke="#444" stroke-width="1"/><line x1="58" y1="618.5" x2="66" y2="618.5" stroke="#444" stroke-width="1"/><line x1="61" y1="632.5" x2="66" y2="632.5" stroke="#444" stroke-width="1"/><line x1="42" y1="645.5" x2="66" y2="645.5" stroke="#444" stroke-width="1"/><line x1="61" y1="659.5" x2="66" y2="659.5" stroke="#444" stroke-width="1"/><line x1="58" y1="673.5" x2="66" y2="673.5" stroke="#444" stroke-width="1"/><line x1="61" y1="687.5" x2="66" y2="687.5" stroke="#444" stroke-width="1"/><line x1="42" y1="701.5" x2="66" y2="701.5" stroke="#444" stroke-width="1"/><line x1="61" y1="715.5" x2="66" y2="715.5" stroke="#444" stroke-width="1"/><line x1="58" y1="728.5" x2="66" y2="728.5" stroke="#444" stroke-width="1"/><line x1="61" y1="742.5" x2="66" y2="742.5" stroke="#444" stroke-width="1"/><line x1="42" y1="756.5" x2="66" y2="756.5" stroke="#444" stroke-width="1"/><line x1="61" y1="770.5" x2="66" y2="770.5" stroke="#444" stroke-width="1"/><line x1="58" y1="784.5" x2="66" y2="784.5" stroke="#444" stroke-width="1"/><line x1="61" y1="797.5" x2="66" y2="797.5" stroke="#444" stroke-width="1"/><line x1="42" y1="811.5" x2="66" y2="811.5" stroke="#444" stroke-width="1"/><line x1="61" y1="825.5" x2="66" y2="825.5" stroke="#444" stroke-width="1"/><line x1="42" y1="174.5" x2="66" y2="174.5" stroke="#c3262c" stroke-width="1.2"/><line x1="58" y1="174.8" x2="66" y2="174.8" stroke="#8a1818" stroke-width="1.6"/></svg><div class="a" style="left:42px;top:136px;width:1099px;height:25px;overflow:hidden"><div class="t" style="left:41.80px;top:4.67px;font-size:12.2px;color:#3a3a3a;">-40</div><div class="t" style="left:97.10px;top:4.67px;font-size:12.2px;color:#3a3a3a;">-20</div><div class="t" style="left:152.40px;top:4.67px;font-size:12.2px;color:#3a3a3a;">0</div><div class="t" style="left:207.70px;top:4.67px;font-size:12.2px;color:#3a3a3a;">20</div><div class="t" style="left:263.00px;top:4.67px;font-size:12.2px;color:#3a3a3a;">40</div><div class="t" style="left:318.30px;top:4.67px;font-size:12.2px;color:#3a3a3a;">60</div><div class="t" style="left:373.60px;top:4.67px;font-size:12.2px;color:#3a3a3a;">80</div><div class="t" style="left:428.90px;top:4.67px;font-size:12.2px;color:#3a3a3a;">100</div><div class="t" style="left:484.20px;top:4.67px;font-size:12.2px;color:#3a3a3a;">120</div><div class="t" style="left:539.50px;top:4.67px;font-size:12.2px;color:#3a3a3a;">140</div><div class="t" style="left:594.80px;top:4.67px;font-size:12.2px;color:#3a3a3a;">160</div><div class="t" style="left:650.10px;top:4.67px;font-size:12.2px;color:#3a3a3a;">180</div><div class="t" style="left:705.40px;top:4.67px;font-size:12.2px;color:#3a3a3a;">200</div><div class="t" style="left:760.70px;top:4.67px;font-size:12.2px;color:#3a3a3a;">220</div><div class="t" style="left:816.00px;top:4.67px;font-size:12.2px;color:#3a3a3a;">240</div><div class="t" style="left:871.30px;top:4.67px;font-size:12.2px;color:#3a3a3a;">260</div><div class="t" style="left:926.60px;top:4.67px;font-size:12.2px;color:#3a3a3a;">280</div><div class="t" style="left:981.90px;top:4.67px;font-size:12.2px;color:#3a3a3a;">300</div><div class="t" style="left:1037.20px;top:4.67px;font-size:12.2px;color:#3a3a3a;">320</div><div class="t" style="left:1092.50px;top:4.67px;font-size:12.2px;color:#3a3a3a;">340</div></div><div class="a" style="left:42px;top:161px;width:24px;height:667px;overflow:hidden"><div class="t" style="left:4.27px;top:52.78px;font-size:12.2px;color:#3a3a3a;transform-origin:0 0;transform:rotate(-90deg) translateY(0)">0</div><div class="t" style="left:4.27px;top:114.86px;font-size:12.2px;color:#3a3a3a;transform-origin:0 0;transform:rotate(-90deg) translateY(0)">20</div><div class="t" style="left:4.27px;top:170.16px;font-size:12.2px;color:#3a3a3a;transform-origin:0 0;transform:rotate(-90deg) translateY(0)">40</div><div class="t" style="left:4.27px;top:225.46px;font-size:12.2px;color:#3a3a3a;transform-origin:0 0;transform:rotate(-90deg) translateY(0)">60</div><div class="t" style="left:4.27px;top:280.76px;font-size:12.2px;color:#3a3a3a;transform-origin:0 0;transform:rotate(-90deg) translateY(0)">80</div><div class="t" style="left:4.27px;top:342.84px;font-size:12.2px;color:#3a3a3a;transform-origin:0 0;transform:rotate(-90deg) translateY(0)">100</div><div class="t" style="left:4.27px;top:398.14px;font-size:12.2px;color:#3a3a3a;transform-origin:0 0;transform:rotate(-90deg) translateY(0)">120</div><div class="t" style="left:4.27px;top:453.44px;font-size:12.2px;color:#3a3a3a;transform-origin:0 0;transform:rotate(-90deg) translateY(0)">140</div><div class="t" style="left:4.27px;top:508.74px;font-size:12.2px;color:#3a3a3a;transform-origin:0 0;transform:rotate(-90deg) translateY(0)">160</div><div class="t" style="left:4.27px;top:564.04px;font-size:12.2px;color:#3a3a3a;transform-origin:0 0;transform:rotate(-90deg) translateY(0)">180</div><div class="t" style="left:4.27px;top:619.34px;font-size:12.2px;color:#3a3a3a;transform-origin:0 0;transform:rotate(-90deg) translateY(0)">200</div><div class="t" style="left:4.27px;top:674.64px;font-size:12.2px;color:#3a3a3a;transform-origin:0 0;transform:rotate(-90deg) translateY(0)">220</div></div><div class="a" style="left:66px;top:161px;width:1075px;height:667px;background:#d8d8d8"></div><div class="a" style="left:1141px;top:156px;width:7px;height:700px;background:linear-gradient(90deg,#f0f0f0,#e4e4e4)"></div><div class="a" style="left:1148px;top:156px;width:1px;height:700px;background:#c4c4c4"></div><div class="a" style="left:200px;top:211px;width:821px;height:581px;background:#979797"></div>
<div class="a" style="left:192px;top:203px;width:822px;height:581px;background:#fff"></div>
<svg class="a" style="left:209px;top:223px;overflow:hidden" width="545" height="541" viewBox="0 0 545 541">
<defs>
<filter id="tex" color-interpolation-filters="sRGB" x="0" y="0" width="100%" height="100%">
 <feTurbulence type="fractalNoise" baseFrequency="0.035" numOctaves="4" seed="7" result="n"/>
 <feColorMatrix in="n" type="matrix" values="0 0 0 0 0  0 0 0 0 0  0 0 0 0 0  -1.4 0 0 0 0.68" result="dark"/>
 <feColorMatrix in="n" type="matrix" values="0 0 0 0 0.62  0 0 0 0 0.78  0 0 0 0 0.55  0.45 0 0 0 -0.3" result="light"/>
 <feTurbulence type="fractalNoise" baseFrequency="0.22" numOctaves="2" seed="2" result="f"/>
 <feColorMatrix in="f" type="matrix" values="0 0 0 0 0  0 0 0 0 0  0 0 0 0 0  -0.6 0 0 0 0.28" result="fd"/>
 <feColorMatrix in="f" type="matrix" values="0 0 0 0 1  0 0 0 0 1  0 0 0 0 1  0.3 0 0 0 -0.2" result="fl"/>
 <feMerge result="m"><feMergeNode in="SourceGraphic"/><feMergeNode in="dark"/><feMergeNode in="light"/><feMergeNode in="fd"/><feMergeNode in="fl"/></feMerge>
 <feComposite in="m" in2="SourceGraphic" operator="in"/>
</filter>
<filter id="ridge" color-interpolation-filters="sRGB" x="0" y="0" width="100%" height="100%">
 <feTurbulence type="turbulence" baseFrequency="0.018 0.03" numOctaves="3" seed="5" result="n"/>
 <feColorMatrix in="n" type="matrix" values="0 0 0 0 0.05  0 0 0 0 0.1  0 0 0 0 0.06  -5 0 0 0 0.75" result="d"/>
 <feGaussianBlur in="d" stdDeviation="0.8" result="d2"/>
 <feColorMatrix in="n" type="matrix" values="0 0 0 0 0.55  0 0 0 0 0.7  0 0 0 0 0.5  1.2 0 0 0 -0.38" result="l"/>
 <feMerge><feMergeNode in="d2"/></feMerge>
</filter>
<filter id="urb" color-interpolation-filters="sRGB" filterUnits="userSpaceOnUse" x="0" y="0" width="545" height="541">
 <feGaussianBlur in="SourceGraphic" stdDeviation="6" result="b"/>
 <feTurbulence type="fractalNoise" baseFrequency="0.3" numOctaves="2" seed="9" result="f"/>
 <feColorMatrix in="f" type="matrix" values="0 0 0 0 0.3  0 0 0 0 0.32  0 0 0 0 0.26  -1.2 0 0 0 0.62" result="fd"/>
 <feColorMatrix in="f" type="matrix" values="0 0 0 0 0.85  0 0 0 0 0.85  0 0 0 0 0.8  1.0 0 0 0 -0.55" result="fl"/>
 <feMerge result="m"><feMergeNode in="b"/><feMergeNode in="fd"/><feMergeNode in="fl"/></feMerge>
 <feComposite in="m" in2="b" operator="in"/>
</filter>
<filter id="blur12" color-interpolation-filters="sRGB"><feGaussianBlur stdDeviation="14"/></filter>
<filter id="blur6" color-interpolation-filters="sRGB"><feGaussianBlur stdDeviation="6"/></filter>
<filter id="spk" color-interpolation-filters="sRGB" x="0" y="0" width="100%" height="100%">
 <feTurbulence type="fractalNoise" baseFrequency="0.07 0.15" numOctaves="3" seed="3" result="n"/>
 <feColorMatrix in="n" type="matrix" values="0 0 0 0 0.64  0 0 0 0 0.48  0 0 0 0 0.13  9 0 0 0 -4.55" result="g"/>
 <feComponentTransfer in="g" result="g2"><feFuncA type="discrete" tableValues="0 1"/></feComponentTransfer>
 <feComposite in="g2" in2="SourceGraphic" operator="in" result="g3"/>
 <feMerge><feMergeNode in="SourceGraphic"/><feMergeNode in="g3"/></feMerge>
</filter>
<filter id="tan" color-interpolation-filters="sRGB" x="0" y="0" width="100%" height="100%">
 <feTurbulence type="fractalNoise" baseFrequency="0.13" numOctaves="3" seed="11" result="n"/>
 <feColorMatrix in="n" type="matrix" values="0 0 0 0 0.78  0 0 0 0 0.68  0 0 0 0 0.42  10 0 0 0 -5.6" result="g"/>
 <feComponentTransfer in="g" result="g2"><feFuncA type="discrete" tableValues="0 1"/></feComponentTransfer>
 <feComposite in="g2" in2="SourceGraphic" operator="in" result="g3"/>
 <feMerge><feMergeNode in="SourceGraphic"/><feMergeNode in="g3"/></feMerge>
</filter>
<clipPath id="gclip"><polygon points="316.8,59.9 334.4,69.2 346.0,64.5 354.2,63.4 360.0,75.0 361.3,89.0 356.6,103.0 376.5,97.0 404.5,90.2 411.5,90.2 412.7,100.8 417.4,109.0 409.0,114.8 397.5,119.5 395.0,131.0 394.0,152.2 397.5,168.5 402.0,182.6 406.8,192.0 409.0,206.0 417.4,215.3 417.4,221.0 404.5,224.7 388.0,229.3 399.8,238.7 410.7,250.7 434.4,267.7 424.2,274.5 393.7,277.8 373.4,283.0 390.3,298.0 393.7,311.7 380.0,316.8 370.0,318.5 366.6,335.5 359.8,342.3 367.7,357.0 363.0,372.0 351.9,381.3 335.0,390.6 325.7,396.2 338.8,407.4 350.0,413.0 356.5,428.0 356.5,446.7 348.1,461.6 335.0,472.8 312.6,487.7 294.0,508.3 288.4,506.4 279.0,485.9 269.7,463.5 266.0,448.5 270.6,435.4 268.7,422.4 269.7,401.8 282.8,395.3 292.0,400.0 297.7,418.6 295.8,435.4 314.5,443.8 325.7,439.2 338.8,422.4 316.4,416.8 314.5,400.0 307.0,387.0 283.7,357.0 281.8,338.9 275.0,318.5 262.5,317.0 251.0,324.0 239.0,314.7 236.8,300.6 243.8,291.0 232.0,275.0 213.5,279.6 204.0,268.0 187.8,263.0 182.0,254.0 183.0,235.0 182.0,223.5 169.0,218.8 165.5,211.8 173.7,204.8 166.7,188.4 167.9,175.6 164.4,167.4 155.0,158.0 144.5,144.0 136.0,117.0 171.0,87.0 241.0,69.0"/></clipPath>
</defs>
<g filter="url(#tex)">
 <rect width="545" height="541" fill="#1c3221"/>
 <g filter="url(#blur12)">
  <polygon points="0.0,0.0 91.0,0.0 121.0,77.0 91.0,197.0 0.0,217.0" fill="#213a26"/>
  <polygon points="0.0,417.0 141.0,427.0 261.0,467.0 271.0,541.0 0.0,541.0" fill="#2e5033"/>
  <polygon points="0.0,337.0 231.0,347.0 241.0,417.0 0.0,407.0" fill="#18301d"/>
  <polygon points="331.0,0.0 441.0,0.0 446.0,77.0 406.0,112.0 351.0,107.0 326.0,67.0" fill="#5c5b43"/>
  <polygon points="331.0,0.0 369.0,0.0 363.0,107.0 331.0,107.0" fill="#6e6046"/>
  <polygon points="376.0,0.0 416.0,0.0 403.0,102.0 371.0,77.0" fill="#2b4630"/>
  <polygon points="436.0,0.0 545.0,0.0 545.0,342.0 506.0,322.0 466.0,257.0 441.0,177.0 423.0,97.0" fill="#868a76"/>
  <ellipse cx="519" cy="77" rx="40" ry="85" fill="#979a88"/>
  <polygon points="396.0,242.0 491.0,277.0 545.0,367.0 545.0,541.0 351.0,541.0 361.0,377.0" fill="#3c6a41"/>
  <polygon points="391.0,157.0 431.0,177.0 451.0,247.0 401.0,257.0" fill="#304d34"/>
  <polygon points="406.0,117.0 461.0,142.0 545.0,182.0 545.0,222.0 481.0,217.0 431.0,242.0 406.0,217.0" fill="#3a5a3c"/>
  <polygon points="0.0,0.0 51.0,0.0 81.0,77.0 31.0,107.0 0.0,107.0" fill="#2c4a30"/>
  <polygon points="529.0,337.0 545.0,337.0 545.0,541.0 533.0,541.0" fill="#74806a"/>
 </g>
 <g filter="url(#blur6)">
  <polygon points="261.0,337.0 291.0,352.0 311.0,397.0 339.0,427.0 321.0,447.0 291.0,437.0 269.0,392.0" fill="#4a4634" opacity=".75"/>
  <polygon points="391.0,377.0 441.0,367.0 491.0,387.0 481.0,417.0 411.0,417.0" fill="#4f7a4c" opacity=".6"/>
  <polygon points="351.0,477.0 431.0,467.0 491.0,497.0 481.0,541.0 351.0,541.0" fill="#46704a" opacity=".6"/>
 </g>
 <g filter="url(#blur6)">
  <ellipse cx="53" cy="392" rx="50" ry="45" fill="#2b4c30"/>
  <ellipse cx="171" cy="402" rx="70" ry="60" fill="#132815"/>
  <polygon points="0.0,477.0 91.0,467.0 261.0,477.0 271.0,541.0 0.0,541.0" fill="#345b39"/>
  <ellipse cx="221" cy="502" rx="35" ry="28" fill="#406842"/>
  <ellipse cx="181" cy="332" rx="11" ry="16" fill="#8d9178" opacity=".7"/>
  <ellipse cx="187" cy="298" rx="24" ry="8" fill="#6d6a4c"/>
  <ellipse cx="221" cy="367" rx="25" ry="60" fill="#24422a"/>
 </g>
 <path d="M70,183 l6,-2 5,3 -1,6 3,4 -6,2 -5,-3z" fill="#d5dac6" opacity=".8"/>
 <path d="M29,205 l6,2 -1,10 3,8 -2,11 -6,-3 1,-9 -3,-9z" fill="#c8d0c0" opacity=".65"/>
 <rect width="545" height="541" fill="#000" filter="url(#ridge)" opacity=".6"/>
</g>
<g filter="url(#urb)">
 <polygon points="441.0,-23.0 581.0,-23.0 581.0,437.0 529.0,427.0 519.0,337.0 499.0,267.0 459.0,222.0 431.0,177.0 423.0,107.0 429.0,47.0" fill="#959684"/>
</g>
<g fill="none" opacity=".75">
 <path d="M400.70000000000005,136 C421,129 441,122 456,109 S474,87 478.4,74" stroke="#3a5238" stroke-width="2.2"/>
 <path d="M400.70000000000005,175 C426,170 451,162 466,150 S491,122 503,92" stroke="#3a5238" stroke-width="2.2"/>
 <path d="M441,52 C456,37 471,17 477,3" stroke="#4a6248" stroke-width="1.8"/>
</g>
<g>
 <polygon points="297.7,418.6 316.4,416.8 338.8,422.4 325.7,439.2 314.5,443.8 295.8,435.4" fill="#534a38"/>
 <polygon points="316.8,59.9 334.4,69.2 346.0,64.5 354.2,63.4 360.0,75.0 361.3,89.0 356.6,103.0 376.5,97.0 404.5,90.2 411.5,90.2 412.7,100.8 417.4,109.0 409.0,114.8 397.5,119.5 395.0,131.0 394.0,152.2 397.5,168.5 402.0,182.6 406.8,192.0 409.0,206.0 417.4,215.3 417.4,221.0 404.5,224.7 388.0,229.3 399.8,238.7 410.7,250.7 434.4,267.7 424.2,274.5 393.7,277.8 373.4,283.0 390.3,298.0 393.7,311.7 380.0,316.8 370.0,318.5 366.6,335.5 359.8,342.3 367.7,357.0 363.0,372.0 351.9,381.3 335.0,390.6 325.7,396.2 338.8,407.4 350.0,413.0 356.5,428.0 356.5,446.7 348.1,461.6 335.0,472.8 312.6,487.7 294.0,508.3 288.4,506.4 279.0,485.9 269.7,463.5 266.0,448.5 270.6,435.4 268.7,422.4 269.7,401.8 282.8,395.3 292.0,400.0 297.7,418.6 295.8,435.4 314.5,443.8 325.7,439.2 338.8,422.4 316.4,416.8 314.5,400.0 307.0,387.0 283.7,357.0 281.8,338.9 275.0,318.5 262.5,317.0 251.0,324.0 239.0,314.7 236.8,300.6 243.8,291.0 232.0,275.0 213.5,279.6 204.0,268.0 187.8,263.0 182.0,254.0 183.0,235.0 182.0,223.5 169.0,218.8 165.5,211.8 173.7,204.8 166.7,188.4 167.9,175.6 164.4,167.4 155.0,158.0 144.5,144.0 136.0,117.0 171.0,87.0 241.0,69.0" fill="#33b923"/>
 <g clip-path="url(#gclip)">
  <ellipse cx="216" cy="207" rx="55" ry="50" fill="#48c738" opacity=".8" filter="url(#blur12)"/><ellipse cx="326" cy="447" rx="30" ry="30" fill="#44c434" opacity=".7" filter="url(#blur12)"/><ellipse cx="331" cy="87" rx="25" ry="25" fill="#45c535" opacity=".6" filter="url(#blur12)"/>
  <g filter="url(#tan)"><polygon points="331.0,135.0 403.0,127.0 419.0,217.0 381.0,229.0 339.0,197.0" fill="#33b923"/></g>
  <g filter="url(#tan)"><polygon points="261.0,417.0 291.0,427.0 301.0,512.0 271.0,512.0" fill="#33b923"/></g>
 </g>
 <polygon points="321.0,160.0 333.0,156.0 348.0,159.0 363.0,175.0 369.6,187.5 370.5,193.0 363.0,202.6 367.0,209.0 377.0,219.3 382.0,229.5 372.0,240.6 375.0,267.7 368.0,288.0 360.0,308.4 342.9,311.7 332.7,325.3 353.0,338.9 332.7,342.3 319.0,335.5 315.7,349.0 305.6,369.4 292.0,369.4 285.2,352.4 278.5,322.0 254.7,308.4 251.3,294.8 258.0,271.0 268.3,261.0 274.0,247.0 279.3,229.5 281.0,217.0 287.0,205.1 288.0,191.0 291.0,179.0 303.0,171.0 313.0,165.0" fill="none" stroke="#a27a24" stroke-width="4" stroke-linejoin="round" stroke-dasharray="7,5,3,6" opacity=".8"/>
 <g filter="url(#spk)"><polygon points="321.0,160.0 333.0,156.0 348.0,159.0 363.0,175.0 369.6,187.5 370.5,193.0 363.0,202.6 367.0,209.0 377.0,219.3 382.0,229.5 372.0,240.6 375.0,267.7 368.0,288.0 360.0,308.4 342.9,311.7 332.7,325.3 353.0,338.9 332.7,342.3 319.0,335.5 315.7,349.0 305.6,369.4 292.0,369.4 285.2,352.4 278.5,322.0 254.7,308.4 251.3,294.8 258.0,271.0 268.3,261.0 274.0,247.0 279.3,229.5 281.0,217.0 287.0,205.1 288.0,191.0 291.0,179.0 303.0,171.0 313.0,165.0" fill="#531d60"/></g>

</g>
<g fill="none" stroke-linecap="round">
 <path d="M507.5,0 C510,37 516,87 524,127 S531,177 526,197 L520.5,204 L545,222" stroke="#d8d8cc" stroke-width="2.4" opacity=".85"/>
 <path d="M484,0 C481,12 479,22 480,32" stroke="#d0d0c0" stroke-width="1.6" opacity=".7"/>
 <path d="M539,7 L539,137 M529,77 L545,77 M529,107 L545,107" stroke="#d8d8d0" stroke-width="1.2" opacity=".6"/>
 <path d="M543,157 L541,327" stroke="#b6a66a" stroke-width="1.6" opacity=".8"/>
 <path d="M545,457 C536,477 533,507 532,533" stroke="#c8b878" stroke-width="1.6"/>
 <path d="M0,468 C11,459 23,449 35,439 S53,433 63,443 L74,432" stroke="#b0bca0" stroke-width="1.3" opacity=".55"/>
</g>
<g>
 <rect x="528" y="144" width="20" height="19" fill="#5aa54e"/>
 <path d="M528,148.5h20" stroke="#e8f8e0" stroke-width="1.2"/>
 <text x="532" y="160" font-family="Liberation Sans" font-weight="bold" font-size="11" fill="#dff5d5">28</text>
 <rect x="530" y="331" width="18" height="16.5" fill="#5aa54e"/>
 <path d="M530,332.5h18" stroke="#e8f8e0" stroke-width="1.2"/>
 <text x="534" y="343" font-family="Liberation Sans" font-weight="bold" font-size="10" fill="#dff5d5">28</text>
 <rect x="513.5" y="530" width="32" height="11" fill="#3f78c6"/>
 <rect x="513.5" y="530" width="32" height="3" fill="#c54a4a"/>
 <path d="M513.5,533.5h32" stroke="#fff" stroke-width="1"/>
 <text x="519" y="543" font-family="Liberation Sans" font-weight="bold" font-size="10" fill="#e6eef8">E35</text>
</g>
<g font-family="Liberation Sans">
 <text x="159.7" y="203.60000000000002" font-size="17" letter-spacing=".25" fill="#bcd8b4" stroke="#1f3f1c" stroke-width="2" stroke-opacity=".45" paint-order="stroke" opacity=".9">Cerro Atacazo</text>
 <path d="M282.5,208 C275,199 273,193 275,188 A8,8 0 1 1 290,188 C292,193 290,199 282.5,208Z" fill="#62d256" opacity=".55"/>
 <text x="443.79999999999995" y="120.30000000000001" font-size="12.6" font-weight="bold" letter-spacing="1.25" fill="#e4e4e4" stroke="#1a1a1a" stroke-width="2.6" paint-order="stroke">GUAMANÍ</text>
 <text x="526.5" y="424.6" font-size="17.5" fill="#eeeeee" stroke="#222" stroke-width="2" paint-order="stroke" stroke-opacity=".7">Ta</text>
</g>
<g transform="translate(504.6,25.30000000000001)" fill="#1b2a5b">
 <path d="M-6.5,-18.3 A19.4,19.4 0 1 0 6.5,-18.3" fill="none" stroke="#1b2a5b" stroke-width="2"/>
 <path d="M-24.4,0h8M16.6,0h8M0,17v7.5" stroke="#1b2a5b" stroke-width="1.3"/>
 <path d="M0,-22.1 L10.6,-0.5 0,-7.7 -10.6,-0.9Z"/>
 <path d="M-5.4,14.2V0.9h3.2l4.8,8.2V0.9h3V14.2h-3.1l-4.9-8.2v8.2z"/>
</g>
</svg>
<div class="a" style="left:765px;top:222px;width:235px;height:542px;border:1px solid #6e6e6e;border-top-color:#555;border-left-color:#555"></div>
<div class="t" style="left:682.20px;width:400px;text-align:center;top:240.07px;font-size:12.2px;font-weight:bold;letter-spacing:0.32px;">MAPA DE SEVERIDAD</div>
<div class="t" style="left:682.10px;width:400px;text-align:center;top:254.17px;font-size:12.2px;font-weight:bold;letter-spacing:0.2px;">ÁREA QUEMADA</div>
<div class="t" style="left:682.10px;width:400px;text-align:center;top:269.97px;font-size:12.2px;font-weight:bold;letter-spacing:0.13px;">CERRO ATACAZO, ECUADOR</div>
<svg class="a" style="left:0;top:0" width="1100" height="800"><rect x="776.5" y="235.5" width="211" height="51" fill="none" stroke="#3b2350" stroke-width="1" stroke-dasharray="3,2"/><rect x="776.5" y="235.5" width="10" height="10" fill="#fff" stroke="#4a86b8" stroke-width="1"/><rect x="877.5" y="235.5" width="10" height="10" fill="#fff" stroke="#4a86b8" stroke-width="1"/><rect x="977.5" y="235.5" width="10" height="10" fill="#fff" stroke="#4a86b8" stroke-width="1"/><rect x="776.5" y="255.5" width="10" height="10" fill="#fff" stroke="#4a86b8" stroke-width="1"/><rect x="977.5" y="255.5" width="10" height="10" fill="#fff" stroke="#4a86b8" stroke-width="1"/><rect x="776.5" y="276.5" width="10" height="10" fill="#fff" stroke="#4a86b8" stroke-width="1"/><rect x="877.5" y="276.5" width="10" height="10" fill="#fff" stroke="#4a86b8" stroke-width="1"/><rect x="977.5" y="276.5" width="10" height="10" fill="#fff" stroke="#4a86b8" stroke-width="1"/></svg>
<div class="t" style="left:779.40px;top:349.64px;font-size:14.6px;">Leyenda</div>
<div class="t" style="left:779.20px;top:376.71px;font-size:11.45px;">Severidad Incendio</div>
<div class="a" style="left:779px;top:393.5px;width:21px;height:12px;background:#fdebc5;border:1px solid #3a3a3a"></div>
<div class="t" style="left:804.70px;top:394.11px;font-size:11.45px;">100 - 269 Severidad baja</div>
<div class="a" style="left:779px;top:411.4px;width:21px;height:12px;background:#fcd97f;border:1px solid #3a3a3a"></div>
<div class="t" style="left:804.70px;top:412.01px;font-size:11.45px;">269 - 440 Severidad moderada baja</div>
<div class="a" style="left:779px;top:429.3px;width:21px;height:12px;background:#d9b06c;border:1px solid #3a3a3a"></div>
<div class="t" style="left:804.70px;top:429.91px;font-size:11.45px;">440 - 660 Severidad moderada alta</div>
<div class="a" style="left:779px;top:447.2px;width:21px;height:12px;background:#9b5fa0;border:1px solid #3a3a3a"></div>
<div class="t" style="left:804.70px;top:447.81px;font-size:11.45px;">660 - 1300 Severidad alta</div>
<div class="t" style="left:795.50px;top:724.61px;font-size:11.8px;">0</div>
<div class="t" style="left:854.60px;top:724.61px;font-size:11.8px;letter-spacing:0.35px;">1000</div>
<div class="t" style="left:923.50px;top:724.61px;font-size:11.8px;letter-spacing:0.5px;">2000 m</div>
<svg class="a" style="left:0;top:0" width="1100" height="800"><rect x="798.5" y="743" width="138" height="8.5" fill="#fff" stroke="#333" stroke-width="1" rx=".8"/><rect x="798" y="742.5" width="70" height="4.8" fill="#000"/><rect x="867.7" y="747" width="69.8" height="5" fill="#000"/></svg><div class="a" style="left:2px;top:828px;width:1139px;height:28px;background:#f0f0f0;border-top:1px solid #bdbdbd"></div><div class="t" style="left:849.00px;top:838.19px;font-size:12.3px;letter-spacing:0.69px;">x: 110 mm</div><div class="t" style="left:955.00px;top:838.19px;font-size:12.3px;letter-spacing:0.71px;">y: 0 mm</div><div class="t" style="left:1061.00px;top:838.19px;font-size:12.3px;letter-spacing:0.3px;">página: 1</div><div class="a" style="left:1137px;top:0px;width:12px;height:856px;background:linear-gradient(90deg,rgba(0,0,0,0),rgba(0,0,0,.045))"></div><div class="a" style="left:1149px;top:0px;width:369px;height:856px;background:#f0f0f0"></div><div class="a" style="left:1149px;top:0px;width:369px;height:36px;background:#fff"></div><div class="a" style="left:1513px;top:7px;width:5px;height:25px;background:#e3e3e3"></div><div class="t" style="left:1158.20px;top:10.54px;font-size:14.6px;color:#9b9b9b;letter-spacing:0.19px;">Propiedades del elemento</div><div class="a" style="left:1149px;top:36px;width:369px;height:21px;background:#c8c8c8;border-bottom:1px solid #bcbcbc"></div><div class="a" style="left:1149px;top:57px;width:1px;height:799px;background:#dadada"></div><div class="t" style="left:1154.00px;top:40.30px;font-size:12.4px;font-weight:bold;letter-spacing:0.59px;">Etiqueta</div><svg class="a" style="left:1164px;top:75px" width="10.5" height="7.5" viewBox="0 0 10 7"><path d="M0 0h10L5 7z" fill="#3a3a3a"/></svg><div class="t" style="left:1183.50px;top:70.90px;font-size:12.4px;font-weight:bold;letter-spacing:0.42px;">Propiedades principales</div><div class="a" style="left:1162px;top:89.5px;width:349px;height:235px;border:1px solid #dcdcdc;border-radius:3px;background:#eeeeee"></div><div class="a" style="left:1175px;top:102.5px;width:322px;height:149px;background:#fff;border:1px solid #adadad"></div><div class="t" style="left:1180.00px;top:109.71px;font-size:11.8px;letter-spacing:-0.1px;">MAPA DE SEVERIDAD</div><div class="t" style="left:1180.00px;top:125.81px;font-size:11.8px;letter-spacing:-0.1px;">ÁREA QUEMADA</div><div class="t" style="left:1180.00px;top:141.91px;font-size:11.8px;letter-spacing:-0.1px;">CERRO ATACAZO, ECUADOR</div><div class="a" style="left:1175px;top:260.2px;width:16.5px;height:16.5px;background:#fff;border:1px solid #9a9a9a"></div><div class="t" style="left:1198.30px;top:264.00px;font-size:12.4px;letter-spacing:0.06px;">Representar como HTML</div><div class="a" style="left:1175px;top:286.5px;width:322px;height:24px;background:linear-gradient(#f6f6f6,#e6e6e6);border:1px solid #adadad;border-radius:2px"></div><div class="t" style="left:1175px;width:322px;text-align:center;top:293.50px;font-size:12.4px;letter-spacing:.28px">Insertar una expresión...</div><svg class="a" style="left:1163.6px;top:338px" width="10.5" height="7.5" viewBox="0 0 10 7"><path d="M0 0h10L5 7z" fill="#3a3a3a"/></svg><div class="t" style="left:1183.20px;top:334.70px;font-size:12.4px;font-weight:bold;letter-spacing:0.52px;">Apariencia</div><div class="a" style="left:1162px;top:352.2px;width:349px;height:252.5px;border:1px solid #dcdcdc;border-radius:3px;background:#eeeeee"></div><div class="a" style="left:1175px;top:365.5px;width:307px;height:32px;background:linear-gradient(#fafafa,#ececec);border:1px solid #adadad;border-radius:2px"></div><div class="a" style="left:1483px;top:365.5px;width:14px;height:32px;background:linear-gradient(#fafafa,#ececec);border:1px solid #adadad;border-radius:2px"></div><svg class="a" style="left:1486px;top:379px" width="8" height="5" viewBox="0 0 6 4"><path d="M0 0h6L3 4z" fill="#555"/></svg><div class="t" style="left:1182.00px;top:370.81px;font-size:22.2px;font-weight:bold;letter-spacing:0.54px;">Tipo de letra</div><div class="t" style="left:1175.00px;top:411.70px;font-size:12.4px;letter-spacing:0.15px;">Color de letras</div><div class="a" style="left:1284.5px;top:404px;width:104px;height:25.5px;background:linear-gradient(#fafafa,#ececec);border:1px solid #adadad;border-radius:2px"></div><div class="a" style="left:1289px;top:406px;width:95.5px;height:20.5px;background:#000;border-radius:2px"></div><div class="a" style="left:1389.5px;top:404px;width:14px;height:25.5px;background:linear-gradient(#fafafa,#ececec);border:1px solid #adadad;border-radius:2px"></div><svg class="a" style="left:1392.5px;top:415px" width="8" height="5" viewBox="0 0 6 4"><path d="M0 0h6L3 4z" fill="#555"/></svg><div class="t" style="left:1175.60px;top:443.50px;font-size:12.4px;letter-spacing:0.176px;">Margen horizontal</div><div class="a" style="left:1284.5px;top:437.5px;width:212.5px;height:22.5px;background:#fff;border:1px solid #adadad;border-radius:2px"></div><div class="a" style="left:1479px;top:438.5px;width:17px;height:20.5px;background:linear-gradient(#f8f8f8,#ececec);border-left:1px solid #c8c8c8"></div><svg class="a" style="left:1483px;top:441.5px" width="9" height="15" viewBox="0 0 9 15"><path d="M0.5 6L4.5 1.5 8.5 6z M0.5 9l4 4.5 4-4.5z" fill="#555"/></svg><div class="t" style="left:1289.00px;top:443.00px;font-size:12.4px;letter-spacing:0.316px;">0,00 mm</div><div class="t" style="left:1175.60px;top:474.40px;font-size:12.4px;letter-spacing:0.157px;">Margen vertical</div><div class="a" style="left:1284.5px;top:468px;width:212.5px;height:22.5px;background:#fff;border:1px solid #adadad;border-radius:2px"></div><div class="a" style="left:1479px;top:469px;width:17px;height:20.5px;background:linear-gradient(#f8f8f8,#ececec);border-left:1px solid #c8c8c8"></div><svg class="a" style="left:1483px;top:472px" width="9" height="15" viewBox="0 0 9 15"><path d="M0.5 6L4.5 1.5 8.5 6z M0.5 9l4 4.5 4-4.5z" fill="#555"/></svg><div class="t" style="left:1289.00px;top:473.50px;font-size:12.4px;letter-spacing:0.316px;">0,00 mm</div><div class="t" style="left:1175.60px;top:500.10px;font-size:12.4px;letter-spacing:0.133px;">Alineación horizontal</div><svg class="a" style="left:1175.7px;top:523.3px" width="16" height="16"><circle cx="8" cy="8" r="7.2" fill="#fff" stroke="#9a9a9a" stroke-width="1"/></svg><div class="t" style="left:1199.60px;top:525.10px;font-size:12.4px;letter-spacing:0.15px;">Izquierda</div><svg class="a" style="left:1263.8px;top:523.3px" width="16" height="16"><circle cx="8" cy="8" r="7.2" fill="#fff" stroke="#9a9a9a" stroke-width="1"/><circle cx="8" cy="8" r="3.2" fill="#333"/></svg><div class="t" style="left:1287.00px;top:525.10px;font-size:12.4px;letter-spacing:0.06px;">Centro</div><svg class="a" style="left:1336.8px;top:523.3px" width="16" height="16"><circle cx="8" cy="8" r="7.2" fill="#fff" stroke="#9a9a9a" stroke-width="1"/></svg><div class="t" style="left:1360.20px;top:525.10px;font-size:12.4px;letter-spacing:-0.05px;">Derecha</div><svg class="a" style="left:1418.5px;top:523.3px" width="16" height="16"><circle cx="8" cy="8" r="7.2" fill="#fff" stroke="#9a9a9a" stroke-width="1"/></svg><div class="t" style="left:1441.90px;top:525.10px;font-size:12.4px;letter-spacing:0.08px;">Justificar</div><div class="t" style="left:1175.60px;top:550.30px;font-size:12.4px;letter-spacing:0.141px;">Alineación vertical</div><svg class="a" style="left:1175.7px;top:573.4px" width="16" height="16"><circle cx="8" cy="8" r="7.2" fill="#fff" stroke="#9a9a9a" stroke-width="1"/></svg><div class="t" style="left:1199.50px;top:575.20px;font-size:12.4px;letter-spacing:0.15px;">Arriba</div><svg class="a" style="left:1245.6px;top:573.4px" width="16" height="16"><circle cx="8" cy="8" r="7.2" fill="#fff" stroke="#9a9a9a" stroke-width="1"/><circle cx="8" cy="8" r="3.2" fill="#333"/></svg><div class="t" style="left:1269.20px;top:575.20px;font-size:12.4px;">Medio</div><svg class="a" style="left:1314.9px;top:573.4px" width="16" height="16"><circle cx="8" cy="8" r="7.2" fill="#fff" stroke="#9a9a9a" stroke-width="1"/></svg><div class="t" style="left:1337.80px;top:575.20px;font-size:12.4px;letter-spacing:0.25px;">Abajo</div><svg class="a" style="left:1165.8px;top:616.8000000000001px" width="7" height="11" viewBox="0 0 7 11"><path d="M0 0L7 5.5 0 11z" fill="#3a3a3a"/></svg><div class="t" style="left:1183.20px;top:615.10px;font-size:12.4px;font-weight:bold;letter-spacing:0.445px;">Posición y tamaño</div><svg class="a" style="left:1165.8px;top:645.7px" width="7" height="11" viewBox="0 0 7 11"><path d="M0 0L7 5.5 0 11z" fill="#3a3a3a"/></svg><div class="t" style="left:1183.20px;top:644.00px;font-size:12.4px;font-weight:bold;letter-spacing:0.456px;">Rotación</div><svg class="a" style="left:1165.8px;top:733.1px" width="7" height="11" viewBox="0 0 7 11"><path d="M0 0L7 5.5 0 11z" fill="#3a3a3a"/></svg><div class="t" style="left:1183.20px;top:731.40px;font-size:12.4px;font-weight:bold;letter-spacing:0.65px;">ID del elemento</div><svg class="a" style="left:1165.8px;top:762.1px" width="7" height="11" viewBox="0 0 7 11"><path d="M0 0L7 5.5 0 11z" fill="#3a3a3a"/></svg><div class="t" style="left:1183.20px;top:760.40px;font-size:12.4px;font-weight:bold;letter-spacing:0.65px;">Representación</div><svg class="a" style="left:1165.8px;top:676.0px" width="7" height="11" viewBox="0 0 7 11"><path d="M0 0L7 5.5 0 11z" fill="#3a3a3a"/></svg><div class="a" style="left:1181px;top:671.5px;width:16.5px;height:16.5px;background:#fff;border:1px solid #9a9a9a"></div><div class="t" style="left:1207.30px;top:674.30px;font-size:12.4px;font-weight:bold;letter-spacing:0.55px;">Marco</div><svg class="a" style="left:1165.8px;top:704.8000000000001px" width="7" height="11" viewBox="0 0 7 11"><path d="M0 0L7 5.5 0 11z" fill="#3a3a3a"/></svg><div class="a" style="left:1181px;top:700.3000000000001px;width:16.5px;height:16.5px;background:#fff;border:1px solid #9a9a9a"></div><div class="t" style="left:1207.30px;top:703.10px;font-size:12.4px;font-weight:bold;letter-spacing:0.55px;">Fondo</div><svg class="a" style="left:1163.6px;top:793px" width="10.5" height="7.5" viewBox="0 0 10 7"><path d="M0 0h10L5 7z" fill="#3a3a3a"/></svg><div class="t" style="left:1183.20px;top:789.20px;font-size:12.4px;font-weight:bold;letter-spacing:0.647px;">Variables</div><div class="a" style="left:1162px;top:808px;width:349px;height:60px;border:1px solid #dcdcdc;border-radius:3px;background:#eeeeee"></div><div class="a" style="left:1178.5px;top:823.5px;width:315px;height:40px;background:#fff;border:1px solid #adadad"></div><div class="a" style="left:1179.5px;top:824.5px;width:296px;height:23px;background:linear-gradient(#fdfdfd,#efefef);border-bottom:1px solid #d0d0d0"></div><div class="a" style="left:1303.5px;top:824.5px;width:1px;height:23px;background:#d5d5d5"></div><div class="a" style="left:1475.5px;top:824.5px;width:1px;height:32px;background:#d5d5d5"></div><div class="a" style="left:1476.5px;top:824.5px;width:16px;height:32px;background:#f0f0f0"></div><div class="a" style="left:1476.5px;top:847px;width:16px;height:1px;background:#dcdcdc"></div><svg class="a" style="left:1479px;top:832px" width="10" height="6" viewBox="0 0 10 6"><path d="M0 6L5 0 10 6z" fill="#606060"/></svg><div class="t" style="left:1181.00px;top:830.29px;font-size:13.6px;letter-spacing:0.6px;">Variable</div><div class="t" style="left:1306.00px;top:830.29px;font-size:13.6px;letter-spacing:0.6px;">Valor</div><div class="t" style="left:1204.00px;top:853.00px;font-size:12.4px;font-weight:bold;letter-spacing:0.6px;">Global</div><div class="a" style="left:244px;top:59px;width:281px;height:308px;background:#fff;border:1px solid #9c9c9c;box-shadow:2px 2px 2px rgba(0,0,0,.28);z-index:30"></div><div class="a" style="left:0;top:0;z-index:31"><svg class="a" style="left:252px;top:64px" width="20" height="20" viewBox="0 0 20 20"><use href="#i-map"/></svg><div class="t" style="left:277.40px;top:66.44px;font-size:14.6px;letter-spacing:0.225px;">Añadir Mapa</div><svg class="a" style="left:252px;top:92px" width="20" height="20" viewBox="0 0 20 20"><use href="#i-3d"/></svg><div class="t" style="left:277.40px;top:94.44px;font-size:14.6px;letter-spacing:0.188px;">Añadir Mapa 3D</div><svg class="a" style="left:252px;top:120px" width="20" height="20" viewBox="0 0 20 20"><use href="#i-img"/></svg><div class="t" style="left:277.40px;top:122.44px;font-size:14.6px;letter-spacing:0.19px;">Añadir Imagen</div><svg class="a" style="left:252px;top:148px" width="20" height="20" viewBox="0 0 20 20"><use href="#i-label"/></svg><div class="t" style="left:277.40px;top:150.44px;font-size:14.6px;letter-spacing:0.144px;">Añadir Etiqueta</div><svg class="a" style="left:252px;top:176px" width="20" height="20" viewBox="0 0 20 20"><use href="#i-legend"/></svg><div class="t" style="left:277.40px;top:178.44px;font-size:14.6px;letter-spacing:-0.033px;">Añadir Leyenda</div><svg class="a" style="left:252px;top:204px" width="20" height="20" viewBox="0 0 20 20"><use href="#i-scale"/></svg><div class="t" style="left:277.40px;top:206.44px;font-size:14.6px;letter-spacing:-0.007px;">Añadir Barra de escala</div><svg class="a" style="left:252px;top:232px" width="20" height="20" viewBox="0 0 20 20"><use href="#i-shape"/></svg><div class="t" style="left:277.40px;top:234.44px;font-size:14.6px;letter-spacing:0.063px;">Añadir Forma</div><svg class="a" style="left:252px;top:260px" width="20" height="20" viewBox="0 0 20 20"><use href="#i-arrow"/></svg><div class="t" style="left:277.40px;top:262.44px;font-size:14.6px;letter-spacing:-0.079px;">Añadir Flecha</div><svg class="a" style="left:252px;top:288px" width="20" height="20" viewBox="0 0 20 20"><use href="#i-node"/></svg><div class="t" style="left:277.40px;top:290.44px;font-size:14.6px;letter-spacing:0.257px;">Añadir Elemento nodo</div><svg class="a" style="left:252px;top:316px" width="20" height="20" viewBox="0 0 20 20"><use href="#i-html"/></svg><div class="t" style="left:277.40px;top:318.44px;font-size:14.6px;letter-spacing:0.043px;">Añadir HTML</div><svg class="a" style="left:252px;top:344px" width="20" height="20" viewBox="0 0 20 20"><use href="#i-table"/></svg><div class="t" style="left:277.40px;top:346.44px;font-size:14.6px;letter-spacing:0.202px;">Añadir Tabla de atributos</div><svg class="a" style="left:513px;top:236.3px" width="5.2" height="9.5" viewBox="0 0 5 9"><path d="M0 0L5 4.5 0 9z" fill="#555"/></svg><svg class="a" style="left:513px;top:292.3px" width="5.2" height="9.5" viewBox="0 0 5 9"><path d="M0 0L5 4.5 0 9z" fill="#555"/></svg></div><div class="a" style="left:225px;top:32px;width:317px;height:348px;border:5px solid #e81d25;z-index:40"></div><div class="a" style="left:741px;top:211px;width:272px;height:110px;border:5px solid #e81d25;z-index:40"></div><div class="a" style="left:769px;top:696px;width:240px;height:79px;border:5px solid #e81d25;z-index:40"></div><div class="a" style="left:0px;top:0px;width:2px;height:856px;background:linear-gradient(90deg,#5a9fe0,#9ccbf3);z-index:60"></div>
</body></html>
